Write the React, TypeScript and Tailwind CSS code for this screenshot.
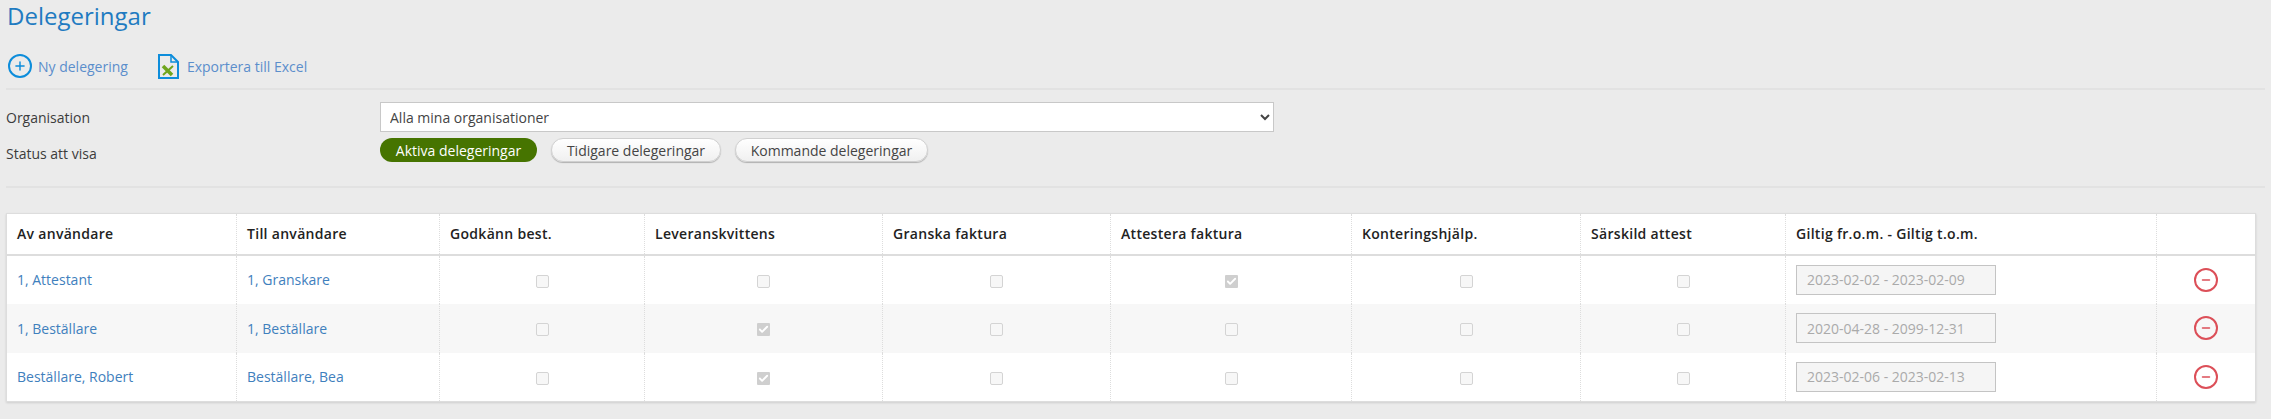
import { Check, Minus, Plus } from "lucide-react";

const columns = [
  { label: "Av användare", width: "w-[230px]" },
  { label: "Till användare", width: "w-[203px]" },
  { label: "Godkänn best.", width: "w-[205px]" },
  { label: "Leveranskvittens", width: "w-[238px]" },
  { label: "Granska faktura", width: "w-[228px]" },
  { label: "Attestera faktura", width: "w-[241px]" },
  { label: "Konteringshjälp.", width: "w-[229px]" },
  { label: "Särskild attest", width: "w-[205px]" },
  { label: "Giltig fr.o.m. - Giltig t.o.m.", width: "w-[371px]" },
  { label: "", width: "w-[99px]" },
];

const rows = [
  {
    from: "1, Attestant",
    to: "1, Granskare",
    checks: [false, false, false, true, false, false],
    dates: "2023-02-02 - 2023-02-09",
  },
  {
    from: "1, Beställare",
    to: "1, Beställare",
    checks: [false, true, false, false, false, false],
    dates: "2020-04-28 - 2099-12-31",
  },
  {
    from: "Beställare, Robert",
    to: "Beställare, Bea",
    checks: [false, true, false, false, false, false],
    dates: "2023-02-06 - 2023-02-13",
  },
];

function Box({ checked }: { checked: boolean }) {
  if (checked) {
    return (
      <span className="inline-flex h-[13px] w-[13px] items-center justify-center rounded-[1px] bg-[#cfcfcf] align-middle">
        <Check className="h-[11px] w-[11px] text-white" strokeWidth={4} />
      </span>
    );
  }
  return (
    <span className="inline-block h-[13px] w-[13px] rounded-[2px] border border-[#d4d4d4] bg-[#f7f7f7] align-middle" />
  );
}

function ExcelIcon() {
  return (
    <svg width="21" height="25" viewBox="0 0 21 25" fill="none">
      <path
        d="M1 1H13L20 8V24H1Z"
        fill="#ebebeb"
        stroke="#0d8ddb"
        strokeWidth="2"
      />
      <path d="M13 1V8H20" stroke="#0d8ddb" strokeWidth="1.5" />
      <path d="M5 12L14 21" stroke="#6fa51d" strokeWidth="3.6" />
      <path d="M15 12L5 21" stroke="#6fa51d" strokeWidth="2" />
    </svg>
  );
}

export default function App() {
  return (
    <div className="min-h-screen bg-[#ebebeb] px-[6px] font-['Open_Sans',sans-serif] text-[14px] text-[#3c3c3c]">
      <h1 className="h-[42px] pl-[1px] text-[24px] leading-[32px] text-[#1f7bc1]">
        Delegeringar
      </h1>

      <div className="flex h-[48px] items-center border-b-2 border-[#e2e2e2] pl-[2px] pt-[2px] text-[14px] text-[#5b8ecb]">
        <a className="flex items-center gap-[6px]">
          <span className="flex h-[24px] w-[24px] items-center justify-center rounded-full border-2 border-[#0d8ddb]">
            <Plus className="h-[14px] w-[14px] text-[#0d8ddb]" strokeWidth={2.5} />
          </span>
          Ny delegering
        </a>
        <a className="ml-[30px] flex items-center gap-[8px]">
          <ExcelIcon />
          Exportera till Excel
        </a>
      </div>

      <div className="grid grid-cols-[374px_894px] grid-rows-[30px_24px] gap-y-[6px] pt-[12px]">
        <div className="self-center">Organisation</div>
        <select className="h-[30px] border border-[#c8c8c8] bg-white pl-[5px] text-[14px] text-[#444]">
          <option>Alla mina organisationer</option>
        </select>
        <div className="self-center pt-[6px]">Status att visa</div>
        <div className="flex items-center gap-[14px]">
          <button className="h-[24px] w-[157px] rounded-full bg-[#467400] text-[14px] text-white">
            Aktiva delegeringar
          </button>
          <button className="h-[24px] w-[170px] rounded-full border border-[#d0d0d0] bg-gradient-to-b from-white to-[#f0f0f0] text-[14px] text-[#444] shadow-[0_1px_1px_rgba(0,0,0,0.25)]">
            Tidigare delegeringar
          </button>
          <button className="h-[24px] w-[193px] rounded-full border border-[#d0d0d0] bg-gradient-to-b from-white to-[#f0f0f0] text-[14px] text-[#444] shadow-[0_1px_1px_rgba(0,0,0,0.25)]">
            Kommande delegeringar
          </button>
        </div>
      </div>

      <div className="mt-[24px] border-b-2 border-[#e2e2e2]" />

      <table className="mt-[25px] w-[2249px] table-fixed border-collapse border border-[#dddddd] bg-white shadow-[0_1px_2px_rgba(0,0,0,0.12)]">
        <thead>
          <tr className="h-[41px] border-b-2 border-[#dddddd]">
            {columns.map((col) => (
              <th
                key={col.label}
                className={`${col.width} border-l border-dotted border-[#dddddd] px-[10px] text-left text-[14px] font-semibold tracking-[0.3px] text-[#222] first:border-l-0`}
              >
                {col.label}
              </th>
            ))}
          </tr>
        </thead>
        <tbody>
          {rows.map((row) => (
            <tr key={row.from} className="h-[49px] even:bg-[#f7f7f7]">
              <td className="px-[10px] text-[14px] text-[#3f80bd]">{row.from}</td>
              <td className="border-l border-dotted border-[#dddddd] px-[10px] text-[14px] text-[#3f80bd]">
                {row.to}
              </td>
              {row.checks.map((checked, i) => (
                <td
                  key={i}
                  className="border-l border-dotted border-[#dddddd] text-center"
                >
                  <Box checked={checked} />
                </td>
              ))}
              <td className="border-l border-dotted border-[#dddddd] px-[10px]">
                <div className="flex h-[30px] w-[200px] items-center border border-[#c4c4c4] bg-[#f5f5f5] px-[10px] text-[14px] text-[#aaaaaa]">
                  {row.dates}
                </div>
              </td>
              <td className="border-l border-dotted border-[#dddddd] text-center">
                <span className="inline-flex h-[24px] w-[24px] items-center justify-center rounded-full border-2 border-[#dc4f58] align-middle">
                  <Minus className="h-[12px] w-[12px] text-[#dc4f58]" strokeWidth={3} />
                </span>
              </td>
            </tr>
          ))}
        </tbody>
      </table>
    </div>
  );
}
